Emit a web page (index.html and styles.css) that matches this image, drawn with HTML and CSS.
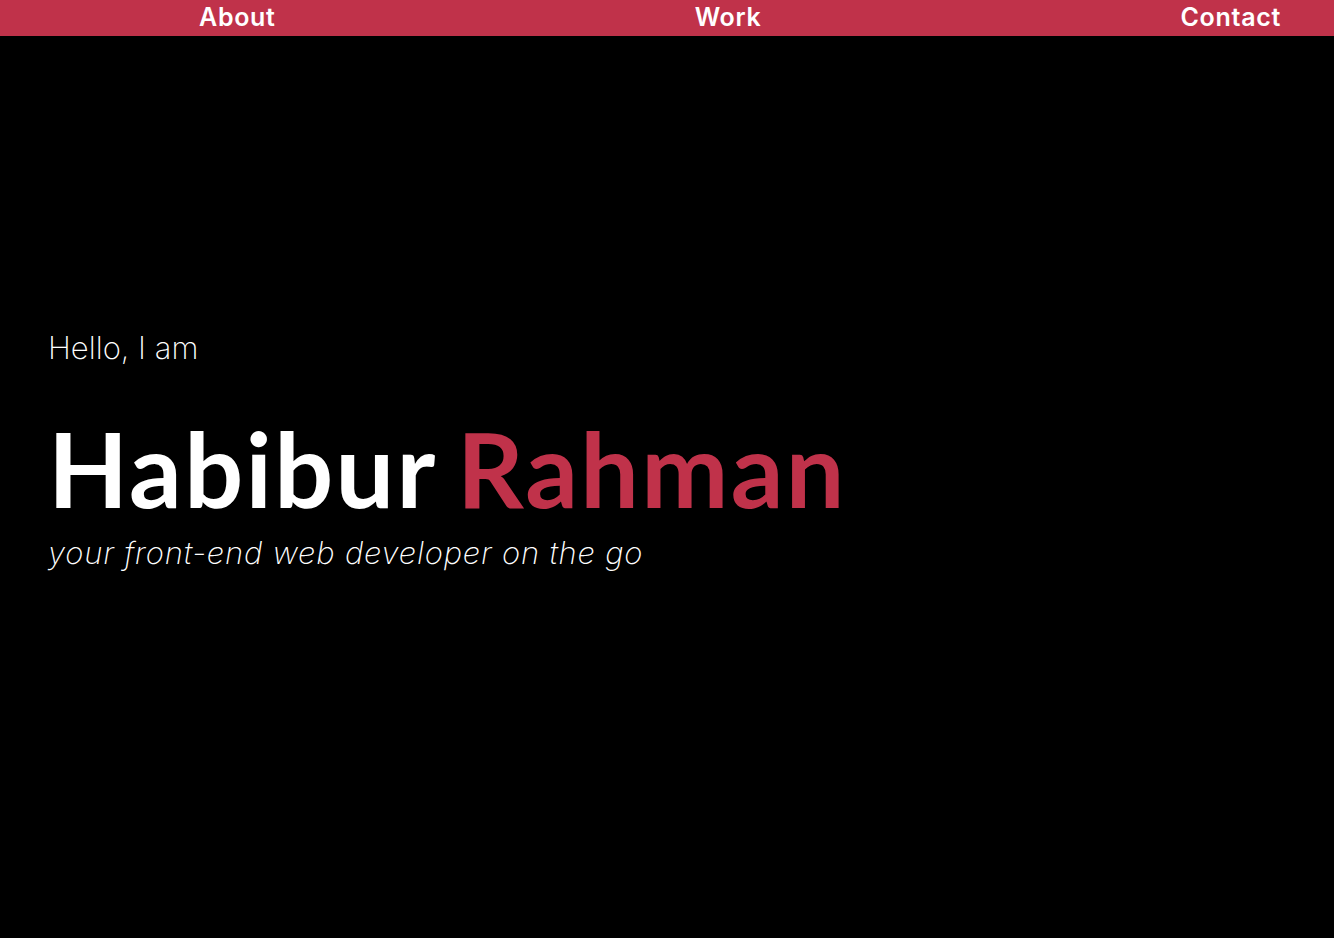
FILE: index.html
```html
<!DOCTYPE html>
<html lang="en">
<head>
<meta charset="utf-8">
<title>Habibur Rahman</title>
<link rel="stylesheet" href="styles.css">
</head>
<body>
<nav class="nav">
  <a class="nav-link" href="#about">About</a>
  <a class="nav-link" href="#work">Work</a>
  <a class="nav-link" href="#contact">Contact</a>
</nav>
<main class="hero">
  <p class="hello">Hello, I am</p>
  <h1 class="name">Habibur <span class="accent">Rahman</span></h1>
  <p class="tagline">your front-end web developer on the go</p>
</main>
</body>
</html>
```

FILE: styles.css
```css
html, body {
  margin: 0;
  padding: 0;
  background: #000;
  height: 100%;
}
body {
  font-family: "Inter", "Noto Sans", sans-serif;
  color: #fff;
}
.nav {
  height: 36px;
  background: #c0324a;
  display: flex;
  justify-content: space-between;
  align-items: center;
  padding: 0 53px 0 199px;
}
.nav-link {
  color: #fff;
  text-decoration: none;
  font-family: "Inter", sans-serif;
  font-weight: 600;
  font-size: 25px;
  letter-spacing: 0.7px;
  line-height: 36px;
  position: relative;
  top: -1px;
}
.hero {
  padding: 290px 48px 0;
}
.hello {
  margin: 0;
  font-weight: 200;
  font-size: 31px;
  line-height: 44px;
}
.name {
  margin: 38px 0 0;
  font-family: "Lato", sans-serif;
  font-weight: 700;
  font-size: 104px;
  line-height: 120px;
  letter-spacing: 2.3px;
  word-spacing: -6px;
}
.accent {
  color: #c0324a;
}
.tagline {
  margin: 3px 0 0;
  font-style: italic;
  font-weight: 200;
  font-size: 31px;
  letter-spacing: 0.8px;
  line-height: 44px;
}
```
